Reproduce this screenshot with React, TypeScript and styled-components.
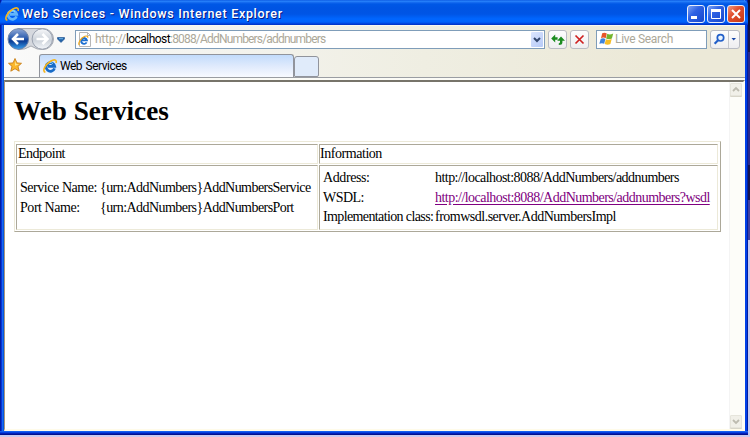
import React from "react";
import styled, { createGlobalStyle } from "styled-components";

const GlobalStyle = createGlobalStyle`
  * { box-sizing: border-box; }
  html, body { margin: 0; padding: 0; overflow: hidden; background: #fff; }
`;

const Desktop = styled.div`
  width: 750px;
  height: 437px;
  padding: 0 2px 2px 0;
  background: linear-gradient(180deg, #10103c 0 30px, #17174f 30px 52px, #29298c 52px 165px, #141450 165px 200px, #4040a0 200px 240px, #c9c9ee 240px 100%);
`;

const Window = styled.div`
  width: 748px;
  height: 435px;
  display: flex;
  flex-direction: column;
  background: linear-gradient(90deg, #001ea0 0 1px, #0831d9 1px 2px, #166aee 2px 3px, #0855dd 3px 4px, #0855dd 4px 744px, #fff 744px 745px, #0040e8 745px 747px, #001ea0 747px);
`;

const TitleBar = styled.header`
  flex: 0 0 25px;
  display: flex;
  align-items: center;
  padding: 3px 3px 0 5px;
  border-radius: 5px 5px 0 0;
  background: linear-gradient(180deg, #0148d8 0, #2d8bff 1px, #1b70f2 2px, #0058e6 4px, #0054e3 8px, #0055e5 14px, #0066ff 19px, #0062fa 22px, #003dd7 24px, #0030c0 25px);
`;

const TitleText = styled.h1`
  flex: 1;
  margin: 0 0 1px 3px;
  font: 500 12.5px/18px Roboto, sans-serif;
  letter-spacing: 0.7px;
  color: #fff;
  text-shadow: 1px 1px #0a1883;
  white-space: nowrap;
`;

const CaptionButtons = styled.div`
  display: flex;
  gap: 2px;
`;

const CaptionButton = styled.button<{ $close?: boolean }>`
  width: 18px;
  height: 18px;
  padding: 0;
  border: 1px solid #e8eefc;
  border-radius: 3px;
  display: block;
  background: ${(p) =>
    p.$close
      ? "linear-gradient(135deg, #ef9b82, #e25030 40%, #c63912)"
      : "linear-gradient(135deg, #7fa4f4, #2f62e4 40%, #1747cc)"};
  svg { display: block; }
`;

const Chrome = styled.div`
  flex: 0 0 55px;
  margin: 0 4px;
  width: 741px;
  display: flex;
  flex-direction: column;
  border-top: 1px solid #f8f8f0;
  background: linear-gradient(90deg, #fafafa 0, #f5f5f2 150px, #efeee2 420px, #ece9d8 640px);
`;

const AddressRow = styled.div`
  flex: 0 0 26px;
  display: flex;
  align-items: center;
  padding: 0 4px 0 3px;
`;

const NavSlot = styled.div`
  width: 68px;
  height: 26px;
`;

const Field = styled.div<{ $w: number; $ml: number }>`
  width: ${(p) => p.$w}px;
  height: 19px;
  margin-left: ${(p) => p.$ml}px;
  padding: 0 1px 0 2px;
  display: flex;
  align-items: center;
  border: 1px solid #7f9db9;
  background: #fff;
  overflow: hidden;
`;

const FieldText = styled.span<{ $spacing: number; $ml: number }>`
  flex: 1;
  margin-left: ${(p) => p.$ml}px;
  font: 400 12px/16px Roboto, sans-serif;
  letter-spacing: ${(p) => p.$spacing}px;
  color: #aca899;
  white-space: nowrap;
`;

const UrlHost = styled.span`
  color: #000;
  letter-spacing: -0.55px;
`;

const UrlScheme = styled.span`
  letter-spacing: -0.25px;
`;

const DropButton = styled.span`
  width: 12px;
  height: 15px;
  display: block;
  border-radius: 1px;
  background: linear-gradient(135deg, #dce6fe, #b5c9f7);
  svg { display: block; }
`;

const ToolButton = styled.button<{ $w: number; $ml: number }>`
  width: ${(p) => p.$w}px;
  height: 19px;
  margin-left: ${(p) => p.$ml}px;
  padding: 0;
  border: 1px solid #b9bcc4;
  border-radius: 3px;
  background: linear-gradient(180deg, #fdfdfd, #eeeef0);
  svg { display: block; }
`;

const TabRow = styled.div`
  flex: 0 0 25px;
  height: 25px;
  display: flex;
  align-items: flex-end;
  padding-left: 4px;
`;

const StarSlot = styled.div`
  width: 31px;
  height: 23px;
`;

const Tab = styled.div`
  width: 255px;
  height: 23px;
  padding-left: 3px;
  display: flex;
  align-items: center;
  border: 1px solid #91949c;
  border-bottom: 0;
  border-radius: 3px 3px 0 0;
  background: linear-gradient(180deg, #c2dbfb, #dfeafc 50%, #f8faff);
`;

const TabLabel = styled.span`
  margin-left: 3px;
  font: 400 12px/16px Roboto, sans-serif;
  letter-spacing: -0.5px;
  word-spacing: 1px;
  color: #000;
`;

const NewTab = styled.div`
  width: 25px;
  height: 21px;
  border: 1px solid #91949c;
  border-radius: 3px 3px 2px 1px;
  background: #e0ebfa;
`;

const ChromeEdge = styled.div`
  flex: 0 0 3px;
  border-top: 1px solid #9a9da2;
  background: #fbfbf6;
`;

const Viewport = styled.main`
  flex: 1;
  min-height: 0;
  display: flex;
  margin: 0 3px 0 4px;
  border-top: 2px solid #77746a;
  border-left: 1px solid #a8977c;
  border-right: 2px solid #fffef5;
  border-bottom: 2px solid #fffbe9;
  background: #fff;
`;

const BottomFrame = styled.div`
  flex: 0 0 4px;
  background: linear-gradient(180deg, #1560f0 0 1px, #0540e0 1px 2px, #0020b8 2px 3px, #001090 3px);
`;

const Page = styled.section`
  flex: 1;
  padding: 12px 0 0 9px;
  font-family: "Liberation Serif", "Times New Roman", serif;
  color: #000;
`;

const Heading = styled.h2`
  height: 47px;
  margin: 0;
  font: 700 27.2px/34px "Liberation Serif", serif;
`;

const EndpointTable = styled.div`
  width: 707px;
  height: 91px;
  display: grid;
  grid-template-columns: 302px 399px;
  grid-template-rows: 20px 65px;
  gap: 1px;
  padding: 2px 2px 1px 1px;
  border: 1px solid;
  border-color: #ece9d8 #aca899 #aca899 #ece9d8;
`;

const Cell = styled.div<{ $padX?: number }>`
  display: flex;
  flex-direction: column;
  justify-content: center;
  padding-left: ${(p) => p.$padX ?? 0}px;
  border: 1px solid;
  border-color: #aca899 #ece9d8 #ece9d8 #aca899;
  font-size: 14px;
  line-height: 19.5px;
`;

const Row = styled.div<{ $labelWidth: number }>`
  display: grid;
  grid-template-columns: ${(p) => p.$labelWidth}px 1fr;
  white-space: nowrap;
`;

const Txt = styled.span<{ $spacing?: number }>`
  letter-spacing: ${(p) => p.$spacing ?? -0.55}px;
  white-space: nowrap;
`;

const Link = styled.a`
  color: #800080;
  text-decoration: underline;
  text-underline-offset: 2px;
`;

const ScrollBar = styled.aside`
  width: 14px;
  display: flex;
  flex-direction: column;
  justify-content: space-between;
  padding: 1px 0;
  border-left: 1px solid #f4f4f4;
  background: #fdfdf9;
`;

const ScrollArrow = styled.div`
  width: 12px;
  height: 13px;
  border: 1px solid #e6e5dc;
  border-radius: 1px;
  background: #f1f0e9;
  box-shadow: 0 1px #d8d6ca;
  svg { display: block; }
`;

const LogoSvg = styled.svg`
  flex: none;
  display: block;
`;

const IeLogo = ({ size = 14, body = "#176bc8" }: { size?: number; body?: string }) => (
  <LogoSvg width={size} height={size} viewBox="0 0 14 14">
    <path d="M11.5 9.4A4.3 4.3 0 1 1 11.7 7.4H5" fill="none" stroke={body} strokeWidth="2.8" />
    <path d="M4 5.2A3.9 3.9 0 0 1 10 4.6" fill="none" stroke="#8edcff" strokeWidth="1" />
    <path d="M2.4 13.2C-1 12.6 1.6 6 7.5 2.3C11 .1 14.2 .4 13 4" fill="none" stroke="#f7b51c" strokeWidth="1.6" />
  </LogoSvg>
);

const PageIcon = () => (
  <svg width="14" height="15" viewBox="0 0 14 15">
    <path d="M1.5.5H9.5L12.5 3.5V14.5H1.5Z" fill="#fff" stroke="#b6b6b6" />
    <path d="M9.5.5V3.5H12.5" fill="none" stroke="#b6b6b6" />
    <path d="M8.6 10.4A2.9 2.9 0 1 1 8.9 8.4H4" fill="none" stroke="#1c6fd0" strokeWidth="1.9" />
    <path d="M1.4 13C-.4 11.5 2.6 6 6.8 4.3C9 3.5 10.2 4.3 9.6 5.8" fill="none" stroke="#f0a818" strokeWidth="1.2" />
  </svg>
);

const NavButtons = () => (
  <svg width="68" height="26" viewBox="0 0 68 26">
    <defs>
      <linearGradient id="back" x1="0" y1="0" x2="0" y2="1">
        <stop offset="0" stopColor="#90a9d6" />
        <stop offset=".45" stopColor="#2f5fb0" />
        <stop offset=".6" stopColor="#0c3c94" />
        <stop offset="1" stopColor="#39a0ee" />
      </linearGradient>
      <linearGradient id="fwd" x1="0" y1="0" x2="0" y2="1">
        <stop offset="0" stopColor="#f6f7f9" />
        <stop offset=".55" stopColor="#ccd2da" />
        <stop offset="1" stopColor="#f3f6fa" />
      </linearGradient>
    </defs>
    <path d="M11 2.5H36A10 10 0 0 1 36 23.5Q30 24 24 20Q18 24 11 23.5Z" fill="#d5d8de" stroke="#a8abb2" />
    <circle cx="11.3" cy="13" r="10.3" fill="url(#back)" stroke="#6d83aa" />
    <circle cx="35.3" cy="13" r="10.2" fill="url(#fwd)" stroke="#9aa2b0" />
    <path d="M17 13H6.5M11 8L6 13L11 18" fill="none" stroke="#fff" strokeWidth="2.5" />
    <path d="M29.5 13H40M35.5 8L40.5 13L35.5 18" fill="none" stroke="#fff" strokeWidth="2.5" />
    <path d="M50.5 11.5H57.5V13L54 16.5L50.5 13Z" fill="#2463a8" stroke="#174c8c" strokeWidth=".6" />
    <path d="M52 12.7H56" stroke="#6db4e4" />
  </svg>
);

const Star = () => (
  <svg width="31" height="23" viewBox="0 0 31 23">
    <path d="M7 4.5L8.9 8.9L13.5 9.3L10 12.4L11.2 17.2L7 14.7L2.8 17.2L4 12.4L.5 9.3L5.1 8.9Z" fill="#fbb72c" stroke="#c87f1a" strokeWidth=".9" strokeLinejoin="round" />
    <path d="M7 6.6L8 9.8L11 10.3L7 11.8Z" fill="#fee58e" />
  </svg>
);

const WindowsFlag = () => (
  <svg width="15" height="14" viewBox="0 0 15 14">
    <path d="M3.2 1.3Q5.5 0 7.8 1.4L6.7 6.2Q4.2 5 2 6.3Z" fill="#e8562a" />
    <path d="M8.3 1.8Q10.8 3.1 14.2 1.5L12.9 6.4Q10 7.7 7.1 6.5Z" fill="#74b52e" />
    <path d="M1.7 6.9Q4 5.7 6.4 6.9L5.2 11.8Q3 10.5.3 11.8Z" fill="#3c83dc" />
    <path d="M6.9 7.3Q9.7 8.5 12.7 7.1L11.4 12.1Q8.6 13.5 5.7 12.1Z" fill="#f6bd25" />
  </svg>
);

export default function App() {
  return (
    <>
      <GlobalStyle />
      <Desktop>
        <Window>
          <TitleBar>
            <IeLogo size={14} body="#62b6fa" />
            <TitleText>Web Services - Windows Internet Explorer</TitleText>
            <CaptionButtons>
              <CaptionButton aria-label="Minimize">
                <svg width="16" height="16"><path d="M3 11.5H9" stroke="#fff" strokeWidth="3" /></svg>
              </CaptionButton>
              <CaptionButton aria-label="Maximize">
                <svg width="16" height="16">
                  <path d="M3.5 4V12.5H12.5V4" fill="none" stroke="#fff" />
                  <path d="M3 4.5H13" stroke="#fff" strokeWidth="3" />
                </svg>
              </CaptionButton>
              <CaptionButton $close aria-label="Close">
                <svg width="16" height="16"><path d="M4 4L12 12M12 4L4 12" stroke="#fff" strokeWidth="2" /></svg>
              </CaptionButton>
            </CaptionButtons>
          </TitleBar>

          <Chrome>
            <AddressRow>
              <NavSlot><NavButtons /></NavSlot>
              <Field $w={470} $ml={0}>
                <PageIcon />
                <FieldText $spacing={-0.82} $ml={3}>
                  <UrlScheme>http://</UrlScheme><UrlHost>localhost</UrlHost>:8088/AddNumbers/addnumbers
                </FieldText>
                <DropButton>
                  <svg width="12" height="15"><path d="M3 6L6 9L9 6" fill="none" stroke="#34486f" strokeWidth="2" /></svg>
                </DropButton>
              </Field>
              <ToolButton $w={19} $ml={3} aria-label="Refresh">
                <svg width="17" height="17">
                  <path d="M2.2 7.5L6.2 3.5V6.3H8.6V8.8H6.2V11.5Z" fill="#1c8c20" />
                  <path d="M12 5.5L16 9.7H13.4V11.5Q13.4 14 9.8 14V12.2Q11 12.2 11 11V9.7H8.2Z" fill="#1c8c20" />
                </svg>
              </ToolButton>
              <ToolButton $w={19} $ml={3} aria-label="Stop">
                <svg width="17" height="17"><path d="M4.5 4.5L12.5 12.5M12.5 4.5L4.5 12.5" stroke="#cf2020" strokeWidth="1.7" /></svg>
              </ToolButton>
              <Field $w={111} $ml={7}>
                <WindowsFlag />
                <FieldText $spacing={-0.3} $ml={1}>Live Search</FieldText>
              </Field>
              <ToolButton $w={30} $ml={3} aria-label="Search">
                <svg width="28" height="17">
                  <path d="M17.5 0V17" stroke="#c5c7cc" />
                  <circle cx="9.5" cy="6.8" r="3.2" fill="#e8f3ff" stroke="#225fc9" strokeWidth="1.7" />
                  <path d="M7.3 9L3.6 12.7" stroke="#225fc9" strokeWidth="2.2" />
                  <path d="M20.5 7H25L22.7 9.5Z" fill="#1747a8" />
                </svg>
              </ToolButton>
            </AddressRow>
            <TabRow>
              <StarSlot><Star /></StarSlot>
              <Tab>
                <IeLogo size={14} />
                <TabLabel>Web Services</TabLabel>
              </Tab>
              <NewTab />
            </TabRow>
            <ChromeEdge />
          </Chrome>

          <Viewport>
            <Page>
              <Heading>Web Services</Heading>
              <EndpointTable>
                <Cell $padX={1}><Txt>Endpoint</Txt></Cell>
                <Cell $padX={0}><Txt $spacing={-0.45}>Information</Txt></Cell>
                <Cell $padX={3}>
                  <Row $labelWidth={80}><Txt $spacing={-0.45}>Service Name:</Txt><Txt>{"{urn:AddNumbers}AddNumbersService"}</Txt></Row>
                  <Row $labelWidth={80}><Txt $spacing={-0.45}>Port Name:</Txt><Txt>{"{urn:AddNumbers}AddNumbersPort"}</Txt></Row>
                </Cell>
                <Cell $padX={3}>
                  <Row $labelWidth={112}><Txt $spacing={-0.4}>Address:</Txt><Txt>http://localhost:8088/AddNumbers/addnumbers</Txt></Row>
                  <Row $labelWidth={112}><Txt>WSDL:</Txt><Txt $spacing={-0.53}><Link>http://localhost:8088/AddNumbers/addnumbers?wsdl</Link></Txt></Row>
                  <Row $labelWidth={112}><Txt $spacing={-0.62}>Implementation class:</Txt><Txt $spacing={-0.5}>fromwsdl.server.AddNumbersImpl</Txt></Row>
                </Cell>
              </EndpointTable>
            </Page>
            <ScrollBar>
              <ScrollArrow>
                <svg width="10" height="11"><path d="M2 7L5 4L8 7" fill="none" stroke="#bdbbb0" strokeWidth="1.8" /></svg>
              </ScrollArrow>
              <ScrollArrow>
                <svg width="10" height="11"><path d="M2 4L5 7L8 4" fill="none" stroke="#bdbbb0" strokeWidth="1.8" /></svg>
              </ScrollArrow>
            </ScrollBar>
          </Viewport>
          <BottomFrame />
        </Window>
      </Desktop>
    </>
  );
}
